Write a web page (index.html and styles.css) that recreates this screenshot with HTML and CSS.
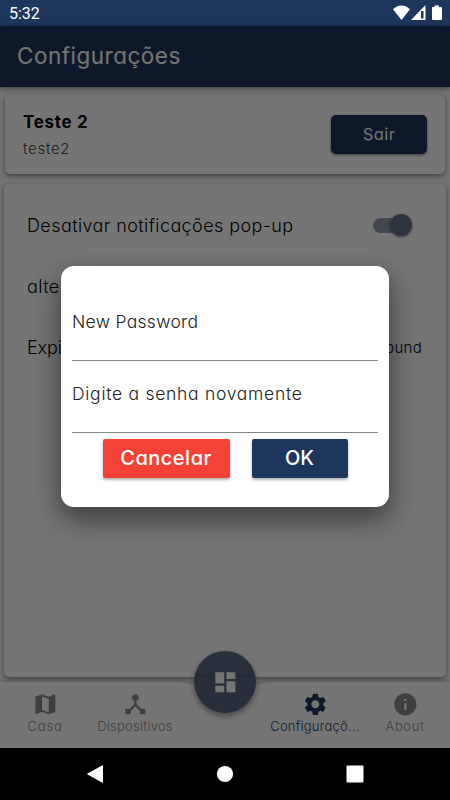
FILE: index.html
```html
<!DOCTYPE html>
<html lang="pt-br">
<head>
    <meta charset="UTF-8">
    <meta name="viewport" content="width=device-width, initial-scale=1.0">
    <title>Configurações</title>
    <link rel="stylesheet" href="styles.css">
</head>
<body>
    <div class="status-bar">
        <span class="clock">5:32</span>
        <svg class="status-icons" width="50" height="16" viewBox="0 0 50 16">
            <path d="M0 4.2C4.6-.9 12.4-.9 17 4.2L8.5 15z"/>
            <path fill-rule="evenodd" d="M18 15L32.5 0v15zM28 6v7.5h2.5V6z"/>
            <path d="M39.5 2h2V.5h4.500V2h2q1 0 1 1v11q0 1-1 1h-8q-1 0-1-1V3q0-1 .5-1z"/>
        </svg>
    </div>

    <div class="app">
        <header class="app-bar"><h1>Configurações</h1></header>

        <main class="content">
            <section class="card user-card">
                <div>
                    <p class="user-name">Teste 2</p>
                    <p class="user-login">teste2</p>
                </div>
                <button class="btn-sair">Sair</button>
            </section>

            <section class="card settings">
                <div class="row">
                    <span>Desativar notificações pop-up</span>
                    <span class="switch"></span>
                </div>
                <div class="row"><span>alterar senha</span></div>
                <div class="row"><span class="expira">Expiração</span><span class="value">not found</span></div>
            </section>
        </main>

        <nav class="tabs">
            <svg class="tabs-bg" width="450" height="66" viewBox="0 0 450 66">
                <path d="M0 0H172C185 0 191 2 198 4C208 28 242 28 252 4C259 2 265 0 278 0H450V66H0z"/>
            </svg>
            <a class="tab">
                <svg class="icon" viewBox="0 0 24 24"><path d="M20.500 3l-.16.03L15 5.100 9 3 3.360 4.900c-.21.070-.36.250-.36.480V20.500c0 .28.220.5.500.5l.16-.03L9 18.900l6 2.100 5.640-1.900c.21-.07.36-.25.36-.48V3.500c0-.28-.22-.5-.5-.5zM15 19l-6-2.110V5l6 2.110V19z"/></svg>
                <span class="casa">Casa</span>
            </a>
            <a class="tab">
                <svg class="icon" viewBox="0 0 24 24"><path d="M17 16l-4-4V8.820C14.160 8.400 15 7.300 15 6c0-1.660-1.340-3-3-3S9 4.340 9 6c0 1.300.84 2.400 2 2.820V12l-4 4H3v5h5v-3.050l4-4.200 4 4.200V21h5v-5h-4z"/></svg>
                <span class="dispositivos">Dispositivos</span>
            </a>
            <a class="tab"></a>
            <a class="tab active">
                <svg class="icon" viewBox="0 0 24 24"><path d="M19.140 12.940c.04-.3.06-.61.06-.94 0-.32-.02-.64-.07-.94l2.030-1.580c.18-.14.23-.41.12-.61l-1.920-3.320c-.12-.22-.37-.29-.59-.22l-2.390.96c-.5-.38-1.030-.7-1.620-.94l-.36-2.540c-.04-.24-.24-.41-.48-.41h-3.840c-.24 0-.43.17-.47.41l-.36 2.540c-.59.24-1.130.57-1.620.94l-2.390-.96c-.22-.08-.47 0-.59.22L2.740 8.870c-.12.21-.08.47.12.61l2.030 1.580c-.05.3-.09.63-.09.94s.02.64.07.94l-2.030 1.580c-.18.14-.23.41-.12.61l1.920 3.320c.12.22.37.29.59.22l2.390-.96c.5.38 1.030.7 1.620.94l.36 2.540c.05.24.24.41.48.41h3.840c.24 0 .44-.17.47-.41l.36-2.540c.59-.24 1.130-.56 1.620-.94l2.390.96c.22.08.47 0 .59-.22l1.920-3.320c.12-.22.07-.47-.12-.61l-2.010-1.580zM12 15.600c-1.980 0-3.600-1.620-3.600-3.600s1.620-3.600 3.600-3.600 3.600 1.620 3.600 3.600-1.620 3.600-3.600 3.600z"/></svg>
                <span>Configuraçõ...</span>
            </a>
            <a class="tab">
                <svg class="icon" viewBox="0 0 24 24"><path d="M12 2C6.480 2 2 6.480 2 12s4.480 10 10 10 10-4.480 10-10S17.520 2 12 2zm1 15h-2v-6h2v6zm0-8h-2V7h2v2z"/></svg>
                <span class="about">About</span>
            </a>
            <button class="fab">
                <svg class="icon" viewBox="0 0 24 24"><path d="M3 13h8V3H3v10zm0 8h8v-6H3v6zm10 0h8V11h-8v10zm0-18v6h8V3h-8z"/></svg>
            </button>
        </nav>

        <div class="overlay">
            <div class="dialog">
                <div class="field"><label class="new-pass">New Password</label></div>
                <div class="field"><label class="again">Digite a senha novamente</label></div>
                <div class="actions">
                    <button class="btn-cancelar">Cancelar</button>
                    <button class="btn-ok">OK</button>
                </div>
            </div>
        </div>
    </div>

    <div class="android-nav">
        <svg viewBox="0 0 18 18"><path d="M17 1v16q0 1-1 .5L1.500 9.500q-.8-.5 0-1L16 .5q1-.5 1 .5z"/></svg>
        <svg viewBox="0 0 18 18"><circle cx="9" cy="9" r="8.100"/></svg>
        <svg viewBox="0 0 18 18"><rect x=".5" y=".5" width="17" height="17" rx="1"/></svg>
    </div>
</body>
</html>
```
FILE: styles.css
```css
* {
    box-sizing: border-box;
}
body {
    margin: 0;
    width: 450px;
    height: 800px;
    overflow: hidden;
    display: flex;
    flex-direction: column;
    font-family: Inter, sans-serif;
    /* single-storey a */
    font-feature-settings: "cv11";
    font-weight: 300;
    color: #000;
    background: #000;
}
h1, p {
    margin: 0;
}
button {
    border: 0;
    padding: 0;
    font: inherit;
    font-feature-settings: inherit;
    font-weight: 500;
    color: white;
    background: #1e355c;
}
.status-bar {
    height: 26px;
    padding: 0 7px 0 9px;
    display: flex;
    align-items: center;
    justify-content: space-between;
    background: #1e355c;
    color: white;
}
.clock {
    font: 400 16px Roboto, sans-serif;
    padding-top: 1px;
}
.status-icons {
    fill: white;
}
.app {
    position: relative;
    height: 722px;
    display: flex;
    flex-direction: column;
    background: #fafafa;
}
.app-bar {
    height: 61px;
    padding: 0 17px 3px;
    display: flex;
    align-items: center;
    background: #1e355c;
    color: white;
    box-shadow: 0 2px 5px rgba(0, 0, 0, 0.4);
}
h1 {
    font-size: 22.5px;
    font-weight: 400;
    letter-spacing: 0.5px;
}
.content {
    height: 595px;
    padding: 8px 4px 5px;
    display: flex;
    flex-direction: column;
    gap: 10px;
}
.card {
    background: white;
    border-radius: 5px;
    box-shadow: 0 2px 5px rgba(0, 0, 0, 0.45);
}
.user-card {
    height: 79px;
    margin: 0 1px;
    padding: 0 18px;
    display: flex;
    align-items: center;
    justify-content: space-between;
}
.user-name {
    font-size: 17px;
    line-height: 28px;
    font-weight: 700;
    letter-spacing: 0.7px;
}
.user-login {
    font-size: 15px;
    line-height: 26px;
    letter-spacing: 0.7px;
    color: #444;
}
.btn-sair {
    width: 96px;
    height: 39px;
    padding-bottom: 2px;
    border-radius: 5px;
    font-size: 16.5px;
    font-weight: 400;
    letter-spacing: 0.4px;
    box-shadow: 0 1px 3px rgba(0, 0, 0, 0.5);
}
.settings {
    flex: 1;
    padding: 11px 24px 0 23px;
    font-size: 18px;
    letter-spacing: 0.41px;
}
.row {
    height: 61px;
    display: flex;
    align-items: center;
    justify-content: space-between;
}
.expira {
    letter-spacing: -0.1px;
}
.value {
    font-size: 15px;
    letter-spacing: 0.3px;
}
.switch {
    width: 39px;
    height: 15px;
    margin: 0 10px 1px 0;
    border-radius: 8px;
    background: #8e9aad;
    display: flex;
    align-items: center;
    justify-content: flex-end;
}
.switch::after {
    content: "";
    width: 22px;
    height: 22px;
    border-radius: 50%;
    background: #61728d;
    box-shadow: 0 1px 3px rgba(0, 0, 0, 0.5);
}
.tabs {
    position: relative;
    height: 66px;
    display: flex;
}
.tabs-bg {
    position: absolute;
    inset: 0;
    fill: white;
    filter: drop-shadow(0 -1px 2px rgba(0, 0, 0, 0.2));
}
.tab {
    position: relative;
    width: 90px;
    padding-top: 9px;
    display: flex;
    flex-direction: column;
    align-items: center;
    font-size: 13px;
    line-height: 17px;
    letter-spacing: 0.25px;
    white-space: nowrap;
    color: #8a8a8a;
    fill: #8a8a8a;
}
.casa {
    letter-spacing: 0.8px;
}
.about {
    letter-spacing: 0.6px;
}
.icon {
    width: 26.7px;
    height: 26.7px;
    flex: none;
}
.active {
    color: #1e355c;
    fill: #1e355c;
}
.fab {
    position: absolute;
    left: 194px;
    top: -31px;
    width: 62px;
    height: 62px;
    border-radius: 50%;
    display: flex;
    align-items: center;
    justify-content: center;
    fill: white;
    background: linear-gradient(#5f6d84, #57667e 35%, #4f5e76 41%, #57667f 47%);
    box-shadow: 0 3px 6px rgba(0, 0, 0, 0.4);
}
.overlay {
    position: absolute;
    inset: 0;
    display: flex;
    justify-content: center;
    align-items: center;
    padding-bottom: 1px;
    background: rgba(0, 0, 0, 0.54);
}
.dialog {
    width: 328px;
    height: 241px;
    padding: 29px 11px 0;
    border-radius: 13px;
    background: white;
    box-shadow: 0 12px 28px rgba(0, 0, 0, 0.4), 0 9px 24px rgba(0, 0, 0, 0.15);
}
.field {
    height: 72px;
    padding-top: 20px;
    font-size: 17.5px;
    line-height: 26px;
    color: #222;
    border-bottom: 1px solid #858585;
}
.field:first-child {
    height: 66px;
    padding-top: 14px;
}
.new-pass {
    letter-spacing: 0.3px;
}
.again {
    letter-spacing: 0.72px;
}
.actions {
    margin-top: 6px;
    display: flex;
    justify-content: center;
    gap: 22px;
}
.actions button {
    width: 96px;
    height: 39px;
    padding-bottom: 2px;
    border-radius: 2px;
    font-size: 20px;
    box-shadow: 0 2px 3px rgba(0, 0, 0, 0.3);
}
.actions .btn-cancelar {
    width: 127px;
    letter-spacing: 0.5px;
    background: #f44336;
}
.android-nav {
    height: 52px;
    padding: 0 86px;
    display: flex;
    align-items: center;
    justify-content: space-between;
    background: #000;
}
.android-nav svg {
    width: 18px;
    height: 18px;
    fill: white;
}
```
